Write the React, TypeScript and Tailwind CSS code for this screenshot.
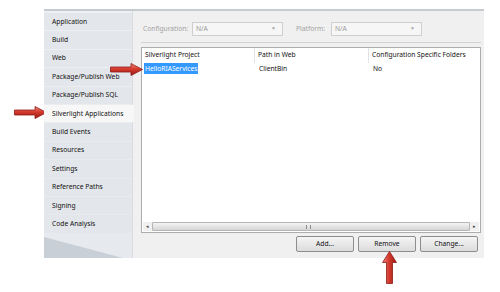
import React from "react"

const tabs = [
    'Application',
    'Build',
    'Web',
    'Package/Publish Web',
    'Package/Publish SQL',
    'Silverlight Applications',
    'Build Events',
    'Resources',
    'Settings',
    'Reference Paths',
    'Signing',
    'Code Analysis',
]

const selectedTab = 'Silverlight Applications'

function RightArrow({ className }: { className: string }) {
    return (
        <svg className={className} width="33" height="13" viewBox="0 0 33 13">
            <defs>
                <linearGradient id="ra" x1="0" y1="0" x2="0" y2="1">
                    <stop offset="0" stopColor="#f08a80" />
                    <stop offset="0.45" stopColor="#d63a2e" />
                    <stop offset="1" stopColor="#9a1a12" />
                </linearGradient>
            </defs>
            <polygon points="0.5,4 21,4 21,0.5 32.5,6.5 21,12.5 21,9 0.5,9" fill="url(#ra)" stroke="#8e1b14" strokeWidth="0.8" />
        </svg>
    )
}

function UpArrow({ className }: { className: string }) {
    return (
        <svg className={className} width="15" height="33" viewBox="0 0 15 33">
            <defs>
                <linearGradient id="ua" x1="0" y1="0" x2="1" y2="0">
                    <stop offset="0" stopColor="#f08a80" />
                    <stop offset="0.45" stopColor="#d63a2e" />
                    <stop offset="1" stopColor="#9a1a12" />
                </linearGradient>
            </defs>
            <polygon points="7.5,0.5 14.5,11.5 10.5,11.5 10.5,32.5 4.5,32.5 4.5,11.5 0.5,11.5" fill="url(#ua)" stroke="#8e1b14" strokeWidth="0.8" />
        </svg>
    )
}

function Select({ width }: { width: string }) {
    return (
        <div className={`${width} h-[14px] border border-[#cfcfcf] bg-[#f6f6f6] flex items-center justify-between px-[3px] text-[#9a9a9a]`}>
            <span>N/A</span>
            <span className="text-[5px] text-[#a8a8a8] pr-[3px]">▼</span>
        </div>
    )
}

export default function App() {
    return (
        <div className="w-[500px] h-[292px] bg-white relative overflow-hidden text-[6.7px] text-[#111]" style={{ fontFamily: '"Noto Sans", sans-serif' }}>
            <div className="pl-[44px] pt-[9px]">
                <div className="w-[440px] h-[249px] flex border-t-2 border-[#c6cbd1] bg-[#f0f0f0]">
                    {/* tab column */}
                    <div className="w-[89px] flex flex-col bg-gradient-to-b from-[#eef0f3] to-[#e6e9ed] border-r border-[#d9dde2]">
                        <div className="flex flex-col gap-px pt-[2px]">
                            {tabs.map(tab => (
                                <div key={tab}
                                    className={tab === selectedTab
                                        ? 'h-[17.4px] flex items-center pl-[8px] bg-[#f7f7f7] -mr-[2px] relative z-10'
                                        : 'h-[17.4px] flex items-center pl-[8px] bg-[#e3e6ea]'}>
                                    {tab}
                                </div>
                            ))}
                        </div>
                        <div className="flex-1 relative">
                            <svg className="absolute inset-0 w-full h-full" viewBox="0 0 88 26" preserveAspectRatio="none">
                                <polygon points="0,4 80,26 0,26" fill="#c9cfd7" />
                            </svg>
                        </div>
                    </div>

                    {/* content */}
                    <div className="flex-1 flex flex-col pl-[8px] pr-[3px] pt-[11px]">
                        <div className="flex items-center h-[14px] pl-[2px] text-[#a3a3a3]">
                            <span className="w-[49px]">Configuration:</span>
                            <Select width="w-[91px]" />
                            <span className="ml-[13px] w-[35px]">Platform:</span>
                            <Select width="w-[91px]" />
                        </div>
                        <div className="mt-[6px] border-t border-[#d2d2d2]" />
                        <div className="mt-[4px] h-[186px] border border-[#adadad] bg-white flex flex-col">
                            <div className="flex h-[15px] items-center">
                                <div className="w-[113px] pl-[3px] border-r border-[#e3e3e3] h-full flex items-center">Silverlight Project</div>
                                <div className="w-[114px] pl-[3px] border-r border-[#e3e3e3] h-full flex items-center">Path in Web</div>
                                <div className="flex-1 pl-[3px]">Configuration Specific Folders</div>
                            </div>
                            <div className="flex h-[11px] items-center mt-[1px]">
                                <div className="w-[113px] pl-[2px]">
                                    <span className="bg-[#3399ff] text-white px-[1px] py-[1px]">HelloRIAServices</span>
                                </div>
                                <div className="w-[114px] pl-[4px]">ClientBin</div>
                                <div className="flex-1 pl-[4px]">No</div>
                            </div>
                            <div className="flex-1" />
                            <div className="h-[9px] mx-[1px] mb-[1px] flex items-stretch bg-[#f0f0f0]">
                                <div className="w-[9px] flex items-center justify-center text-[5px] text-[#444]">◂</div>
                                <div className="flex-1 border border-[#b5b5b5] rounded-[1px] bg-gradient-to-b from-[#f4f4f4] to-[#d6d6d6] flex items-center justify-center pr-[6px]">
                                    <div className="w-[5px] h-[4px] border-x border-[#8a8a8a]" />
                                </div>
                                <div className="w-[9px] flex items-center justify-center text-[5px] text-[#444]">▸</div>
                            </div>
                        </div>
                        <div className="mt-[3px] flex justify-end gap-[4px] pr-[3px]">
                            {['Add...', 'Remove', 'Change...'].map(b => (
                                <div key={b} className="w-[58px] h-[16px] border border-[#8d8d8d] rounded-[2px] bg-gradient-to-b from-[#f5f5f5] to-[#dcdcdc] flex items-center justify-center">
                                    {b}
                                </div>
                            ))}
                        </div>
                    </div>
                </div>
            </div>

            <RightArrow className="absolute left-[14px] top-[106px]" />
            <RightArrow className="absolute left-[110px] top-[63px]" />
            <UpArrow className="absolute left-[382px] top-[251px]" />
        </div>
    )
}
